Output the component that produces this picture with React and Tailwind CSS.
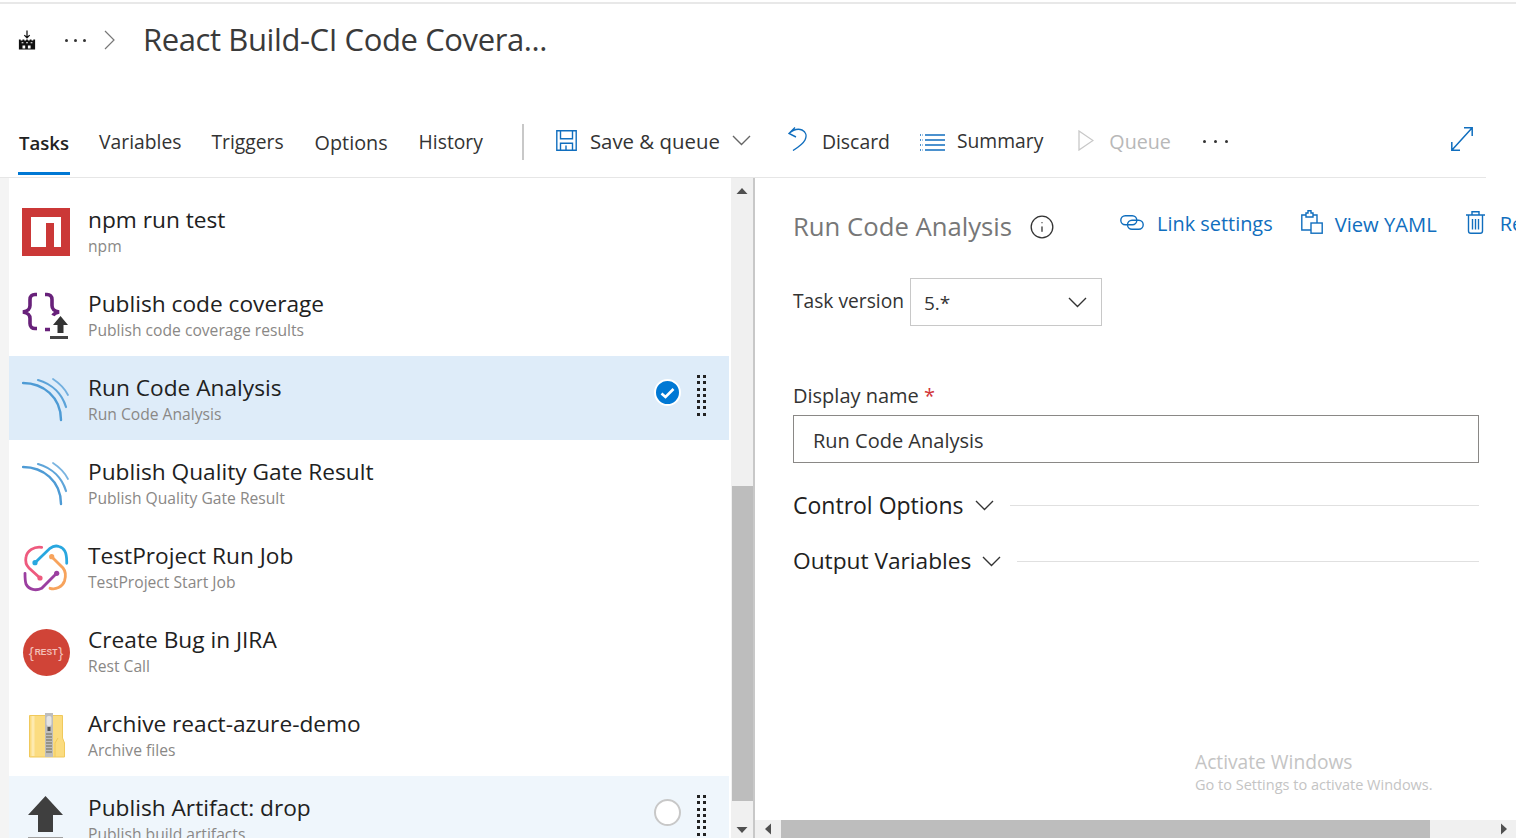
import { Info } from "lucide-react"

const FONT = "font-['Open_Sans','Noto_Sans',sans-serif]"

function Dots({ className = "", dot = "h-[3px] w-[3px]", gap = "gap-[6px]" }) {
  return (
    <span className={`flex items-center ${gap} ${className}`}>
      <span className={`${dot} rounded-full bg-[#333]`} />
      <span className={`${dot} rounded-full bg-[#333]`} />
      <span className={`${dot} rounded-full bg-[#333]`} />
    </span>
  )
}

function Chevron({ className = "", color = "#333" }) {
  return (
    <svg className={className} width="19" height="11" viewBox="0 0 19 11" fill="none" stroke={color} strokeWidth="1.4">
      <path d="M1 1l8.5 8.5L18 1" />
    </svg>
  )
}

function SaveIcon() {
  return (
    <svg width="21" height="21" viewBox="0 0 21 21" fill="none" stroke="#106ebe" strokeWidth="1.4">
      <path d="M.8.8h19.4v19.4H.8zM4.5.8v8h12v-8M4.5 20.2v-7h12v7M10 15.5v4.7" />
    </svg>
  )
}

function UndoIcon() {
  return (
    <svg width="20" height="24" viewBox="0 0 20 24" fill="none" stroke="#106ebe" strokeWidth="1.4">
      <path d="M7 .5 1 6.5 8 10M1 6.5C5 3 10 1.5 14 3c4 2 5 6 3 10-2 4-8 8-12 10.500" />
    </svg>
  )
}

function SummaryIcon() {
  return (
    <svg width="25" height="17" viewBox="0 0 25 17" fill="none" stroke="#106ebe" strokeWidth="1.4">
      <path d="M0 1h2.500M0 6h2.500M0 11h2.500M0 16h2.500" strokeDasharray="1 1" />
      <path d="M5 1h20M5 6h20M5 11h20M5 16h20" />
    </svg>
  )
}

function PlayIcon() {
  return (
    <svg width="16" height="21" viewBox="0 0 16 21" fill="none" stroke="#c8c8c8" strokeWidth="1.3">
      <path d="M1 1l14 9.500L1 20z" />
    </svg>
  )
}

function ExpandIcon() {
  return (
    <svg width="22" height="24" viewBox="0 0 22 24" fill="none" stroke="#106ebe" strokeWidth="1.5">
      <path d="M1 23 21 1M13 .8h8.200V9M.8 15v8.200H9" />
    </svg>
  )
}

function BuildIcon() {
  return (
    <svg width="18" height="21" viewBox="0 0 20 22">
      <path d="M10 0v7M7 5l3 3 3-3" fill="none" stroke="#111" strokeWidth="1.4" />
      <path d="M1 21V10h2v1h2v-1h2v1h2v-1h2v1h2v-1h2v1h2v-1h2v11z" fill="#111" />
      <path d="M4 13h2v1H4zM9 13h2v1H9zM14 13h2v1h-2zM5 16.500h3V20H5zM11 16.500h3V20h-3z" fill="#fff" />
    </svg>
  )
}

function LinkIcon() {
  return (
    <svg width="24" height="15" viewBox="0 0 24 15" fill="none" stroke="#106ebe" strokeWidth="1.4">
      <rect x=".8" y=".8" width="16" height="9" rx="4.500" />
      <rect x="7.500" y="5.200" width="15.700" height="9" rx="4.500" />
    </svg>
  )
}

function ClipboardIcon() {
  return (
    <svg width="22" height="24" viewBox="0 0 22 24" fill="none" stroke="#106ebe" strokeWidth="1.4">
      <path d="M5 5H.8v15H10M12 5h4v8M5 7V3h2V.8h3V3h2v4z" />
      <rect x="10" y="13" width="11.200" height="10.200" />
    </svg>
  )
}

function TrashIcon() {
  return (
    <svg width="19" height="23" viewBox="0 0 19 23" fill="none" stroke="#106ebe" strokeWidth="1.4">
      <path d="M0 4h19M6 4V.8h7V4M2.500 4v16c0 1.500 1 2.300 2.300 2.300h9.400c1.300 0 2.300-.8 2.300-2.300V4M6.500 8v10.500M9.500 8v10.500M12.500 8v10.500" />
    </svg>
  )
}

function NpmIcon() {
  return (
    <svg width="48" height="48" viewBox="0 0 48 48">
      <rect width="48" height="48" fill="#cb3837" />
      <path d="M9 9h30v30H9z" fill="#fff" />
      <path d="M24 15h8v24h-8z" fill="#cb3837" />
    </svg>
  )
}

function CoverageIcon() {
  return (
    <svg width="48" height="48" viewBox="0 0 48 48" fill="none">
      <path d="M15 2.500h-2c-3 0-5 2-5 5v6c0 4-2 5.500-7 6.500 5 1 7 2.500 7 6.500v5c0 3 2 5 5 5h2" stroke="#68217a" strokeWidth="3.600" />
      <path d="M23 2.500h2c3 0 5 2 5 5v6c0 4 2 5.500 7 6.500-3 .6-5 1.500-6 3.500M23 37.500h5" stroke="#68217a" strokeWidth="3.600" />
      <path d="M38.500 24 46 33h-4.500v8h-6v-8H31z" fill="#333" />
      <rect x="28" y="44" width="18" height="3" fill="#444" />
    </svg>
  )
}

function SonarIcon() {
  return (
    <svg width="48" height="48" viewBox="0 0 48 48" fill="none" stroke="#4e9bd5" strokeLinecap="round">
      <path d="M1 7c20 0 38 14 38 37" strokeWidth="2.400" />
      <path d="M16 4c14 4 24 14 28 27" strokeWidth="2.200" opacity="0.9" />
      <path d="M31 3c6 4 12 10 15 16" strokeWidth="1.800" opacity="0.75" />
    </svg>
  )
}

function TestProjectIcon() {
  return (
    <svg width="48" height="48" viewBox="0 0 48 48" fill="none" strokeWidth="2.800" strokeLinecap="round">
      <path d="M19.700 3.300C12 2 5 7 4 13c-1 5 0 8 3 11l11 10" stroke="#ee5a7e" />
      <path d="M13 18.700 28 4.300C31 2 34 1.500 37 2.500c5 1.500 8 5 7.700 16.800" stroke="#29a7df" />
      <path d="M29.700 12.700 41 24c2.500 3 3 8 1.500 13-2 6-9 9-14.500 7.300" stroke="#f7a35c" />
      <path d="M34.700 29.300 19.700 44.300C14 47 7 46 4 40c-1-3-1-7-1-10.700" stroke="#9b3fa0" />
      <circle cx="13" cy="18.700" r="2.600" fill="#29a7df" stroke="none" />
      <circle cx="29.700" cy="12.700" r="2.600" fill="#f7a35c" stroke="none" />
      <circle cx="34.700" cy="29.300" r="2.600" fill="#9b3fa0" stroke="none" />
      <circle cx="18" cy="34" r="2.600" fill="#ee5a7e" stroke="none" />
    </svg>
  )
}

function RestIcon() {
  return (
    <div className="flex h-[47px] w-[47px] items-center justify-center gap-[1px] rounded-full bg-[#d04437] font-['Liberation_Sans',sans-serif] font-bold text-[#f3bfb8]">
      <span className="text-[15px] font-normal leading-none">{"{"}</span>
      <span className="text-[8.5px] leading-none">REST</span>
      <span className="text-[15px] font-normal leading-none">{"}"}</span>
    </div>
  )
}

function ZipIcon() {
  return (
    <svg width="48" height="48" viewBox="0 0 48 48">
      <path d="M7.500 3.500h33V26l2 5v14h-35z" fill="#fbdc80" stroke="#f0c95c" />
      <path d="M11 4v40" stroke="#fdeab0" strokeWidth="3" />
      <path d="M36 26l-3 5v14" fill="none" stroke="#f0c95c" />
      <rect x="23" y="1" width="8" height="44" fill="#bdbdbd" />
      <path d="M24 22h6M24 25h6M24 28h6M24 31h6M24 34h6M24 37h6M24 40h6" stroke="#6e6a55" strokeWidth="1.200" />
      <rect x="24.500" y="4" width="5" height="10" rx="2" fill="#e4e4e4" />
      <rect x="25.500" y="15" width="3" height="4" fill="#555" />
    </svg>
  )
}

function ArtifactIcon() {
  return (
    <svg width="48" height="48" viewBox="0 0 48 48">
      <path d="M23.500 0 41 19H31v17H16V19H6z" fill="#3f3f3f" />
      <rect x="6" y="41" width="35" height="3" fill="#a0a0a0" />
    </svg>
  )
}

function Grip() {
  return (
    <div className="mt-[19px] grid grid-cols-2 gap-x-[3.5px] gap-y-[3.3px]">
      {Array.from({ length: 14 }).map((_, i) => (
        <span key={i} className="h-[3px] w-[3px] bg-[#222]" />
      ))}
    </div>
  )
}

const tasks = [
  { name: "npm run test", sub: "npm", icon: <NpmIcon /> },
  { name: "Publish code coverage", sub: "Publish code coverage results", icon: <CoverageIcon /> },
  { name: "Run Code Analysis", sub: "Run Code Analysis", icon: <SonarIcon />, state: "selected" },
  { name: "Publish Quality Gate Result", sub: "Publish Quality Gate Result", icon: <SonarIcon /> },
  { name: "TestProject Run Job", sub: "TestProject Start Job", icon: <TestProjectIcon /> },
  { name: "Create Bug in JIRA", sub: "Rest Call", icon: <RestIcon /> },
  { name: "Archive react-azure-demo", sub: "Archive files", icon: <ZipIcon /> },
  { name: "Publish Artifact: drop", sub: "Publish build artifacts", icon: <ArtifactIcon />, state: "hover" },
]

function TaskRow({ task }) {
  const bg = task.state === "selected" ? "bg-[#deecf9]" : task.state === "hover" ? "bg-[#eff6fc]" : "bg-white"
  return (
    <div className={`flex h-[84px] shrink-0 items-center pl-[13px] pr-[23px] ${bg}`}>
      <div className="mt-[4px] flex h-12 w-12 shrink-0 items-center justify-center">{task.icon}</div>
      <div className="ml-[18px] flex-1 pt-[2px]">
        <div className="text-[22.7px] leading-[29px] text-[#212121]">{task.name}</div>
        <div className="text-[15.65px] leading-[24px] text-[#8a8886]">{task.sub}</div>
      </div>
      {task.state && (
        <div className="flex items-start gap-[16px] self-start">
          {task.state === "selected" ? (
            <div className="mt-[23px] flex h-[27px] w-[27px] items-center justify-center rounded-full border-2 border-white bg-[#0078d4]">
              <svg width="15" height="12" viewBox="0 0 15 12" fill="none" stroke="#fff" strokeWidth="2.600">
                <path d="M1.500 6.500 5.500 10 13.500 2" />
              </svg>
            </div>
          ) : (
            <div className="mt-[23px] h-[27px] w-[27px] rounded-full border-2 border-[#c8c8c8] bg-white" />
          )}
          <Grip />
        </div>
      )}
    </div>
  )
}

function Tab({ label, active, className = "text-[19.3px]" }) {
  return (
    <div className="relative flex h-full items-center">
      <span className={`translate-y-px ${active ? "text-[18.6px] font-semibold text-[#212121]" : `text-[#333] ${className}`}`}>{label}</span>
      {active && <span className="absolute bottom-[2px] -left-px -right-px h-[3px] bg-[#0078d4]" />}
    </div>
  )
}

function Section({ label, size }) {
  return (
    <div className="flex items-center">
      <span className={`${size} leading-[30px] text-[#212121]`}>{label}</span>
      <Chevron className="ml-[11px]" />
      <div className="ml-[16px] h-px flex-1 bg-[#e0e0e0]" />
    </div>
  )
}

function Triangle({ dir }) {
  const paths = { up: "M.5 9 6 3l5.500 6z", down: "M.5 3 6 9l5.500-6z", left: "M9 .5 3 6l6 5.500z", right: "M3 .5 9 6l-6 5.500z" }
  return (
    <svg width="12" height="12" viewBox="0 0 12 12">
      <path d={paths[dir]} fill="#505050" />
    </svg>
  )
}

export default function App() {
  return (
    <div className={`relative flex h-[838px] w-[1516px] flex-col overflow-hidden bg-white ${FONT}`}>
      <div className="mt-[2px] h-[2px] bg-[#e8e8e8]" />

      <header className="flex h-[76px] shrink-0 items-start pl-[18px] pt-[14px]">
        <div className="flex h-[44px] items-center">
          <BuildIcon />
          <Dots className="ml-[29px]" />
          <svg className="ml-[18px]" width="11" height="20" viewBox="0 0 11 20" fill="none" stroke="#777" strokeWidth="1.200">
            <path d="M1 1l9 9-9 9" />
          </svg>
          <h1 className="ml-[28px] -translate-y-px text-[31px] font-normal tracking-[-0.4px] text-[#3a3a3a]">React Build-CI Code Covera...</h1>
        </div>
      </header>

      <nav className="flex h-[98px] shrink-0 items-end">
        <div className="flex h-[98px] w-[1486px] items-center border-b border-[#e6e6e6] pl-[19px] pt-[26px]">
          <div className="flex h-full items-center gap-[30px]">
            <Tab label="Tasks" active />
            <Tab label="Variables" />
            <Tab label="Triggers" />
            <Tab label="Options" className="ml-[1px] text-[19.8px]" />
            <Tab label="History" className="ml-[1px] text-[19.3px]" />
          </div>
          <div className="ml-[39px] h-[36px] w-[2px] bg-[#c8c8c8]" />
          <div className="flex flex-1 items-center pr-[13px] text-[#333]">
            <span className="ml-[32px] -translate-y-px"><SaveIcon /></span>
            <span className="ml-[13px] text-[20.4px]">Save &amp; queue</span>
            <Chevron className="ml-[12px] -translate-y-px" color="#666" />
            <span className="ml-[37px] -translate-y-[2px]"><UndoIcon /></span>
            <span className="ml-[14px] text-[19.4px]">Discard</span>
            <span className="ml-[30px] translate-y-px"><SummaryIcon /></span>
            <span className="ml-[12px] text-[19.3px]">Summary</span>
            <span className="ml-[35px] -translate-y-px"><PlayIcon /></span>
            <span className="ml-[15px] text-[19.7px] text-[#b8b8b8]">Queue</span>
            <Dots className="ml-[32px]" gap="gap-[8px]" />
            <span className="ml-auto -translate-y-[2px]"><ExpandIcon /></span>
          </div>
        </div>
      </nav>

      <main className="flex min-h-0 flex-1">
        <div className="w-[9px] shrink-0 bg-[#f4f4f4]" />

        <div className="flex w-[720px] shrink-0 flex-col overflow-hidden pt-[10px]">
          {tasks.map((task) => (
            <TaskRow key={task.name} task={task} />
          ))}
        </div>

        <div className="ml-[2px] flex w-[22px] shrink-0 flex-col items-center bg-[#f0f0f0] pb-[2px] pt-[7px]">
          <Triangle dir="up" />
          <div className="mb-[23px] mt-[289px] w-[21px] flex-1 bg-[#bdbdbd]" />
          <Triangle dir="down" />
        </div>
        <div className="w-[2px] shrink-0 bg-[#c8c8c8]" />

        <section className="flex min-w-0 flex-1 flex-col">
          <div className="flex-1 overflow-hidden pl-[38px] pr-[37px] pt-[30px]">
            <div className="flex w-[800px] items-center">
              <h2 className="whitespace-nowrap text-[25.7px] font-normal leading-[38px] text-[#777]">Run Code Analysis</h2>
              <Info className="ml-[17px] text-[#333]" size={26} strokeWidth={1.200} />
              <span className="ml-[65px] -translate-y-[5px]"><LinkIcon /></span>
              <span className="ml-[13px] -translate-y-[3px] whitespace-nowrap text-[19.9px] text-[#106ebe]">Link settings</span>
              <span className="ml-[28px] -translate-y-[5px]"><ClipboardIcon /></span>
              <span className="ml-[12px] -translate-y-[3px] whitespace-nowrap text-[20.2px] text-[#106ebe]">View YAML</span>
              <span className="ml-[29px] -translate-y-[5px]"><TrashIcon /></span>
              <span className="ml-[15px] -translate-y-[3px] text-[20px] text-[#106ebe]">Remove</span>
            </div>

            <div className="mt-[32px] flex items-center">
              <label className="-translate-y-px text-[19.2px] text-[#333]">Task version</label>
              <div className="ml-[6px] flex h-[48px] w-[192px] items-center justify-between border border-[#c8c8c8] pl-[13px] pr-[14px]">
                <span className="pt-[2px] text-[19px] text-[#333]">5.*</span>
                <Chevron />
              </div>
            </div>

            <div className="mt-[56px] text-[20px] leading-[27px] text-[#333]">
              Display name <span className="text-[#d13438]">*</span>
            </div>
            <div className="mt-[6px] flex h-[48px] items-center border border-[#8a8886] px-[19px] pt-[3px] text-[20px] text-[#333]">
              Run Code Analysis
            </div>

            <div className="mt-[27px]"><Section label="Control Options" size="text-[23px]" /></div>
            <div className="mt-[26px]"><Section label="Output Variables" size="text-[22.7px]" /></div>
          </div>

          <div className="flex h-[18px] shrink-0 items-center bg-[#f0f0f0] pl-[7px] pr-[6px]">
            <Triangle dir="left" />
            <div className="ml-[7px] h-full w-[649px] bg-[#bdbdbd]" />
            <span className="ml-auto"><Triangle dir="right" /></span>
          </div>
        </section>
      </main>

      <div className="absolute left-[1195px] top-[749px] text-[#c4c4c4]">
        <div className="text-[19.2px] leading-[26px]">Activate Windows</div>
        <div className="text-[14.5px] leading-[20px]">Go to Settings to activate Windows.</div>
      </div>
    </div>
  )
}
